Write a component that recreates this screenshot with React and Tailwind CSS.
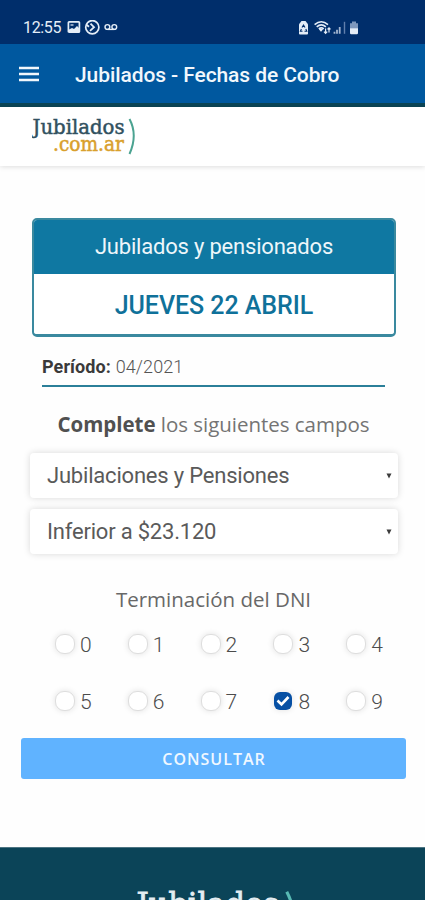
const roboto = "font-['Roboto',sans-serif]";
const openSans = "font-['Open_Sans',sans-serif]";

function StatusBar() {
  return (
    <div className={`${roboto} flex h-[44px] items-center bg-[#002e6b] pl-[23px] pr-[66px] pt-[11px] text-[#e4edf7]`}>
      <span className="w-[44px] text-[16px] leading-4 tracking-[-0.35px]">12:55</span>
      <svg width="53" height="16" viewBox="0 0 53 16" fill="none" stroke="currentColor">
        <rect x="1.4" y="1.8" width="11" height="10.4" rx="0.8" strokeWidth="1.7" />
        <path d="M2 9.5 5 8l2 1 3-3 2 2v4H2z" fill="currentColor" stroke="none" />
        <path d="M3.5 5h3" strokeWidth="1.2" />
        <circle cx="25.3" cy="7.2" r="6.6" strokeWidth="1.7" />
        <path d="M23.5 3.6 27 7.2 23 10.8M19.5 4.8l2.5 2" strokeWidth="1.8" />
        <circle cx="40.4" cy="7" r="2.4" strokeWidth="1.4" />
        <circle cx="47.3" cy="7" r="2.4" strokeWidth="1.4" />
        <path d="M40.5 9.4h7" strokeWidth="1.4" />
      </svg>
      <svg className="ml-auto" width="62" height="16" viewBox="0 0 62 16" fill="none" stroke="currentColor">
        <path d="M2 4.2 4.5 1h4L11 4.2V13.7q0 .7-1 .7H3q-1 0-1-.7z" fill="currentColor" stroke="none" />
        <path d="M5 7.5 6.5 5 8 7.5M8.8 9l1 2.2H7.5M5.5 11.2H3.4l1-2.2" stroke="#002e6b" strokeWidth="1.1" />
        <path d="M17.6 4.6q6.7-5.7 13.4 0M19.7 6.8q4.6-3.8 9.2 0M21.8 8.9q2.5-2 5 0" strokeWidth="1.6" />
        <path d="m22.5 9.5 1.5 1.8 1.5-1.8z" fill="currentColor" />
        <path d="M28.6 8.4v5m-1.6-1.7 1.6 1.7 1.6-1.7M32 12.4V7.8m-1.5 1.6L32 7.8l1.5 1.6" strokeWidth="1.2" />
        <path d="M37.5 13.8v-2M40 13.8v-4M42.7 13.8V7" stroke="#a3b6d0" strokeWidth="1.8" />
        <path d="M47.5 13.8V1.8" stroke="#607fac" strokeWidth="1.4" />
        <path d="M53 3.3h2V1.5h4v1.8h2v5.5h-8z" fill="#7e98bd" stroke="none" />
        <path d="M53 8.3h8V13q0 1.2-1.2 1.2h-5.6Q53 14.2 53 13z" fill="currentColor" stroke="none" />
      </svg>
    </div>
  );
}

function AppBar() {
  return (
    <div className={`${roboto} flex h-[63px] items-center border-b-[4px] border-[#0b4556] bg-[#00589f] pl-[19px] text-[#f1f7fc]`}>
      <svg className="mr-[36px]" width="20" height="16" viewBox="0 0 20 16" stroke="currentColor" strokeWidth="2.4">
        <path d="M0 2h20M0 8h20M0 14h20" />
      </svg>
      <h1 className="whitespace-nowrap pt-[2px] text-[21px] font-medium leading-6 tracking-[-0.09px]">Jubilados - Fechas de Cobro</h1>
    </div>
  );
}

function Logo({ className, top, bottom, arc }) {
  return (
    <svg className={className} viewBox="0 0 105 40" fontFamily="'DejaVu Serif',serif">
      <text x="0.5" y="17.8" fontSize="20.5" textLength="92" lengthAdjust="spacingAndGlyphs" fill={top} stroke={top} strokeWidth="0.5">Jubilados</text>
      <text x="21" y="34.8" fontSize="20.5" textLength="71" lengthAdjust="spacingAndGlyphs" fill={bottom} stroke={bottom} strokeWidth="0.5">.com.ar</text>
      <path d="M97.5 3Q106 19 97.5 38" fill="none" stroke={arc} strokeWidth="2" />
    </svg>
  );
}

function SelectBox({ children }) {
  return (
    <div className={`${roboto} flex h-[45px] items-center justify-between rounded-[4px] bg-white pl-[17px] pr-[6px] text-[22px] tracking-[-0.2px] text-[#5a5a5a] shadow-[0_0_7px_rgba(0,0,0,0.15)]`}>
      <span className="leading-6">{children}</span>
      <svg width="6" height="6" viewBox="0 0 6 6">
        <path d="M.5.5h5L3 5.5z" fill="#3c3c3c" />
      </svg>
    </div>
  );
}

function Digit({ value, checked }) {
  return (
    <div className="flex h-6 items-center gap-[5px]">
      {checked ? (
        <span className="mx-px flex h-[18px] w-[18px] items-center justify-center rounded-[6px] bg-[#0750a4] shadow-[0_0_6px_rgba(0,0,0,0.12)]">
          <svg width="14" height="12" viewBox="0 0 14 12" fill="none" stroke="white" strokeWidth="2.6">
            <path d="m1.5 5.5 4 4 7-7.5" />
          </svg>
        </span>
      ) : (
        <span className="h-5 w-5 rounded-[9px] border border-[#dedede] bg-white shadow-[0_0_6px_rgba(0,0,0,0.12)]" />
      )}
      <span className={`${roboto} pt-px text-[21px] font-light leading-6 text-[#4c4c4c]`}>{value}</span>
    </div>
  );
}

export default function App() {
  return (
    <div className="flex h-[900px] w-[425px] flex-col overflow-hidden bg-[#fefefe]">
      <StatusBar />
      <AppBar />
      <header className="h-[59px] shrink-0 bg-white pl-[32px] pt-[9px] shadow-[0_1px_5px_rgba(0,0,0,0.13)]">
        <Logo className="h-[40px] w-[105px]" top="#31515f" bottom="#d9a02d" arc="#4ba391" />
      </header>

      <main className="flex h-[681px] shrink-0 flex-col pt-[52px]">
        <section className={`${roboto} ml-[32px] flex h-[119px] w-[364px] flex-col overflow-hidden rounded-[5px] border-2 border-b-[3px] border-[#3a899f] bg-white text-center`}>
          <div className="-mx-px -mt-px h-[55px] bg-[#0f78a2] pt-[15px] text-[22px] leading-[25px] tracking-[-0.2px] text-[#edf6fa]">Jubilados y pensionados</div>
          <div className="pt-[18px] text-[25px] font-medium leading-[28px] tracking-[-0.05px] text-[#0f719a]">JUEVES 22 ABRIL</div>
        </section>

        <div className={`${roboto} ml-[42px] mt-[18px] h-[32px] w-[343px] border-b-2 border-[#2b7f99] text-[18px] leading-6 tracking-[0.1px] text-[#3a3a3a]`}>
          <strong className="font-bold">Período:</strong> <span className="font-light text-[#555]">04/2021</span>
        </div>

        <p className={`${openSans} mt-[23px] pl-[2px] text-center text-[20.5px] leading-[28px] tracking-[-0.03px] text-[#747474]`}>
          <strong className="font-bold text-[#505050]">Complete</strong> los siguientes campos
        </p>

        <div className="ml-[30px] mt-[15px] flex w-[368px] flex-col gap-[11px]">
          <SelectBox>Jubilaciones y Pensiones</SelectBox>
          <SelectBox>Inferior a $23.120</SelectBox>
        </div>

        <p className={`${openSans} mt-[31px] pl-[2px] text-center text-[20.5px] leading-[28px] text-[#686868]`}>Terminación del DNI</p>

        <div className="ml-[55px] mt-[19px] grid w-[364px] grid-cols-5 gap-y-[33px]">
          {[0, 1, 2, 3, 4, 5, 6, 7, 8, 9].map((n) => (
            <Digit key={n} value={n} checked={n === 8} />
          ))}
        </div>

        <button className={`${openSans} ml-[21px] mt-[25px] h-[41px] w-[385px] rounded-[3px] bg-[#60b3ff] pl-px pt-px text-[16px] font-semibold tracking-[1px] text-[#f0f8ff]`}>CONSULTAR</button>
      </main>

      <footer className="h-[53px] shrink-0 overflow-hidden border-t border-[#4d7482] bg-[#0b4458] pl-[135px] pt-[39px]">
        <Logo className="h-[62px] w-[164px]" top="#e4edf2" bottom="#d9a02d" arc="#58b9b3" />
      </footer>
    </div>
  );
}
